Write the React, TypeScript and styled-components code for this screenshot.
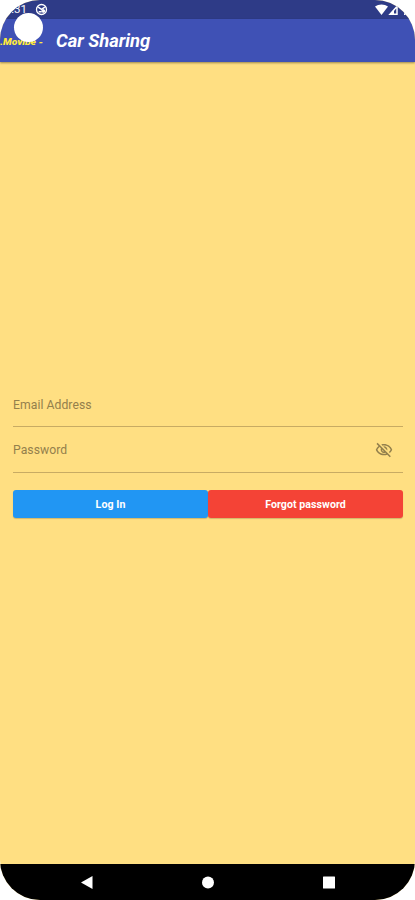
import React from 'react';
import styled, { createGlobalStyle } from 'styled-components';
import { MdOutlineVisibilityOff } from 'react-icons/md';

const GlobalStyle = createGlobalStyle`
  * { box-sizing: border-box; }
  body { margin: 0; background: #fff; font-family: Roboto, sans-serif; }
`;

const Screen = styled.main`
  position: relative;
  width: 415px;
  height: 900px;
  display: flex;
  flex-direction: column;
  overflow: hidden;
  border-radius: 40px;
  background: #ffdf82;
`;

const StatusBar = styled.header`
  height: 19px;
  flex: none;
  display: flex;
  justify-content: space-between;
  padding: 3px 4px 0 6px;
  background: #2e3b87;
  color: #fff;
`;

const StatusGroup = styled.div<{ $gap: number }>`
  display: flex;
  gap: ${({ $gap }) => $gap}px;
  height: 13px;
  align-items: center;
`;

const Clock = styled.span`
  width: 21px;
  font-size: 11.5px;
  line-height: 13px;
  text-align: right;
`;

const AppBar = styled.div`
  height: 43px;
  flex: none;
  display: flex;
  align-items: center;
  background: #3f51b5;
  box-shadow: 0 1px 2px rgba(0, 0, 0, 0.4);
`;

const Brand = styled.svg`
  width: 56px;
  height: 12px;
  flex: none;
  display: block;
  fill: #ffeb3b;
  font: italic 900 9px Roboto, sans-serif;
`;

const Title = styled.h1`
  margin: 0;
  color: #fff;
  font-size: 18.4px;
  font-style: italic;
  font-weight: 700;
  line-height: 22px;
`;

const Camera = styled.div`
  position: absolute;
  top: 13px;
  left: 14px;
  width: 29px;
  height: 29px;
  border-radius: 50%;
  background: #fff;
`;

const Form = styled.form`
  flex: 1;
  display: flex;
  flex-direction: column;
  padding: 320px 12px 0 13px;
`;

const Field = styled.label<{ $height: number }>`
  height: ${({ $height }) => $height}px;
  display: flex;
  justify-content: space-between;
  padding: 16px 10px 0 0;
  border-bottom: 1px solid #c8ab63;
  color: #94804c;
  font-size: 12.2px;
  line-height: 15px;
  letter-spacing: 0.05px;
`;

const VisibilityIcon = styled(MdOutlineVisibilityOff)`
  width: 18px;
  height: 18px;
  margin-top: -2px;
`;

const Actions = styled.div`
  display: grid;
  grid-template-columns: 1fr 1fr;
  margin-top: 17px;
`;

const Button = styled.button<{ $color: string }>`
  height: 28px;
  padding: 0;
  border: 0;
  border-radius: 3px;
  background: ${({ $color }) => $color};
  box-shadow: 0 1px 1px rgba(0, 0, 0, 0.18);
  color: #fff;
  font: 700 10.6px/29px Roboto, sans-serif;
  letter-spacing: 0.06px;
`;

const NavBar = styled.nav`
  height: 36px;
  flex: none;
  display: grid;
  grid-template-columns: repeat(3, 12px);
  justify-content: center;
  align-items: center;
  column-gap: 109px;
  background: #000;
`;

const NavIcon = styled.svg`
  width: 12px;
  height: 13px;
  display: block;
  fill: #fff;
`;

export default function App() {
  return (
    <>
      <GlobalStyle />
      <Screen>
        <StatusBar>
          <StatusGroup $gap={8}>
            <Clock>:31</Clock>
            <svg width="13" height="13" viewBox="0 0 13 13" fill="none" stroke="#fff">
              <circle cx="6.5" cy="6.5" r="5" strokeWidth="1.3" />
              <path d="M3.2 4.2 6.5 6.3 9.8 4.2M3.7 8.7h3" strokeWidth="1.5" />
              <circle cx="8.3" cy="8" r="1.4" fill="#fff" />
            </svg>
          </StatusGroup>
          <StatusGroup $gap={0}>
            <svg width="13" height="13" viewBox="0 0 13 13">
              <path d="M0 3.6C3.7.7 9.3.7 13 3.6L6.5 12Z" fill="#fff" />
            </svg>
            <svg width="12" height="13" viewBox="0 0 12 13">
              <path d="M2 11.2 9 3.5v7.7Z" fill="none" stroke="#fff" strokeWidth="1.5" />
              <path d="M2 11 6 7v4Z" fill="#fff" />
            </svg>
            <svg width="11" height="13" viewBox="0 0 11 13">
              <path d="M4 3h6v9H4z" fill="#fff" />
            </svg>
          </StatusGroup>
        </StatusBar>
        <AppBar>
          <Brand viewBox="0 0 56 12">
            <text x="0" y="9.5" textLength="43" lengthAdjust="spacingAndGlyphs">.Movibe -</text>
          </Brand>
          <Title>Car Sharing</Title>
        </AppBar>
        <Form>
          <Field $height={45}>Email Address</Field>
          <Field $height={46}>
            Password
            <VisibilityIcon />
          </Field>
          <Actions>
            <Button type="button" $color="#2196f3">Log In</Button>
            <Button type="button" $color="#f44336">Forgot password</Button>
          </Actions>
        </Form>
        <NavBar>
          <NavIcon viewBox="0 0 12 13"><path d="M0 6.5 11.5 0v13Z" /></NavIcon>
          <NavIcon viewBox="0 0 12 13"><circle cx="6" cy="6.5" r="6" /></NavIcon>
          <NavIcon viewBox="0 0 12 13"><rect width="12" height="12" y=".5" rx=".5" /></NavIcon>
        </NavBar>
        <Camera />
      </Screen>
    </>
  );
}
